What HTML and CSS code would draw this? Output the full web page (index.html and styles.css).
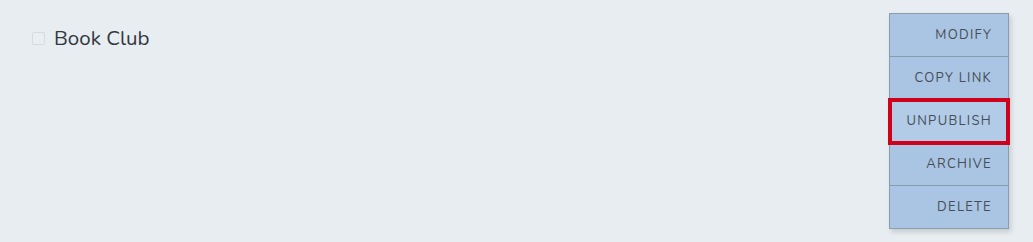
FILE: index.html
```html
<!DOCTYPE html>
<html lang="en">
<head>
<meta charset="utf-8">
<title>Book Club</title>
<link rel="stylesheet" href="styles.css">
</head>
<body>
<div class="page">
  <div class="row">
    <span class="check"></span>
    <span class="title">Book Club</span>
  </div>
  <ul class="menu">
    <li class="item">Modify</li>
    <li class="item">Copy link</li>
    <li class="item item-focus">Unpublish</li>
    <li class="item">Archive</li>
    <li class="item">Delete</li>
  </ul>
</div>
</body>
</html>
```
FILE: styles.css
```css
html, body {
  margin: 0;
  padding: 0;
  background: #e8edf2;
}
.page {
  position: relative;
  width: 1033px;
  height: 242px;
  font-family: "Nunito", "Lato", "Open Sans", sans-serif;
}
.row {
  display: flex;
  align-items: center;
  gap: 9px;
  padding: 26px 0 0 32px;
}
.check {
  width: 11px;
  height: 11px;
  border: 1px solid #d6dbe0;
  border-radius: 2px;
  background: #eaeef2;
  margin-top: 1px;
}
.title {
  font-size: 20.5px;
  color: #333840;
  line-height: 24px;
}
.menu {
  position: absolute;
  left: 889px;
  top: 13px;
  width: 118px;
  margin: 0;
  padding: 0;
  list-style: none;
  background: #a9c5e3;
  border: 1px solid #8b9cad;
  box-shadow: 2px 3px 5px rgba(0, 0, 0, 0.15);
}
.item {
  height: 42px;
  line-height: 42px;
  text-align: right;
  padding-right: 16px;
  font-family: "Nunito", "Lato", sans-serif;
  font-size: 13px;
  letter-spacing: 1.3px;
  text-transform: uppercase;
  color: #474d56;
  border-bottom: 1px solid #8a9bac;
}
.item:last-child {
  border-bottom: none;
}
.item-focus {
  background: #b2cce8;
  outline: 4px solid #d0021b;
  outline-offset: -2px;
  position: relative;
}
```
